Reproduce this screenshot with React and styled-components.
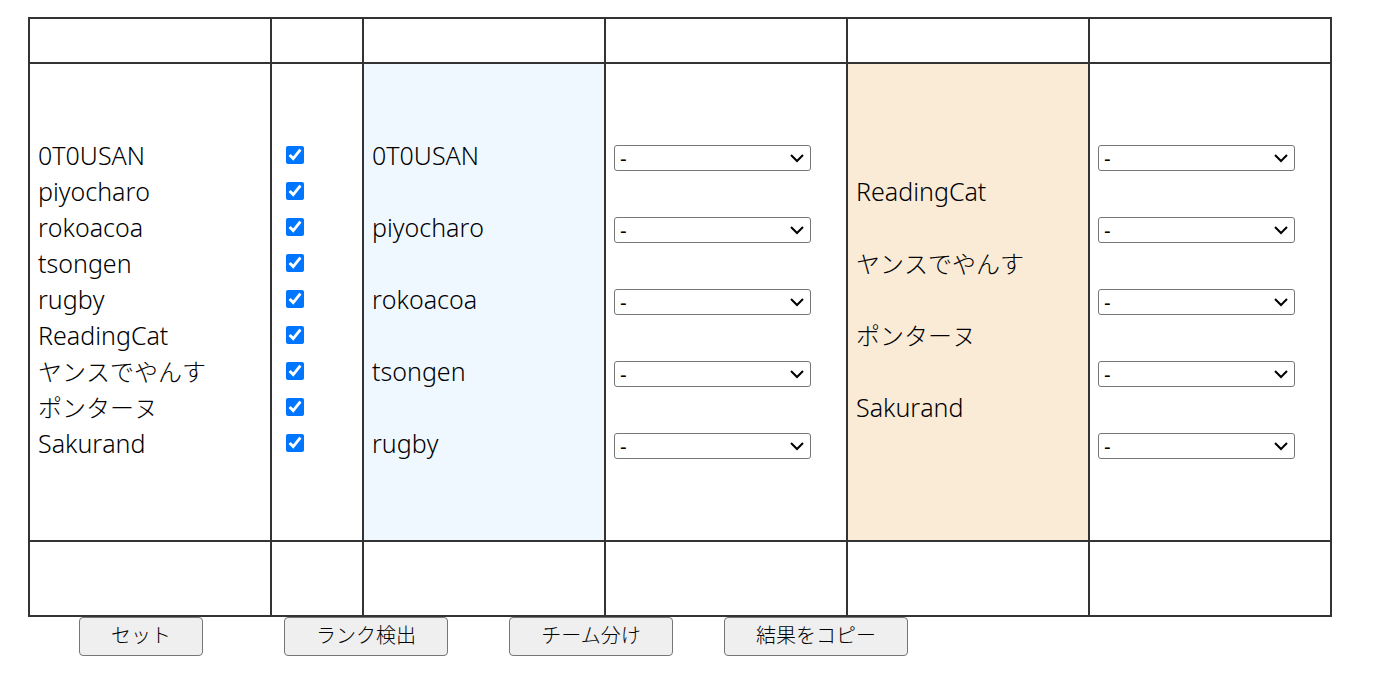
import React, { useState } from "react";
import styled, { createGlobalStyle } from "styled-components";

const GlobalStyle = createGlobalStyle`
  *, *::before, *::after { box-sizing: border-box; }
  body {
    margin: 0;
    background: #fff;
    color: #000;
    font-family: "Noto Sans", "Noto Sans CJK JP", sans-serif;
    font-weight: 350;
    font-size: 25px;
    line-height: 34px;
    font-kerning: none;
  }
`;

const Page = styled.main`
  padding: 17px 46px 18px 28px;
`;

const Board = styled.table`
  width: 100%;
  table-layout: fixed;
  border-collapse: collapse;
`;

const CheckCol = styled.col`
  width: 92px;
`;

const Cell = styled.td`
  height: ${(p) => p.$height}px;
  padding: 0;
  border: 2px solid #333;
`;

const ListCell = styled.td`
  padding: 74px 8px 78px;
  padding-left: ${(p) => p.$inset || 8}px;
  border: 2px solid #333;
  background: ${(p) => p.$tint || "transparent"};
  vertical-align: top;
`;

const Lines = styled.ul`
  display: grid;
  grid-auto-rows: 36px;
  row-gap: ${(p) => (p.$spaced ? 36 : 0)}px;
  margin: 0;
  padding: ${(p) => (p.$shifted ? 36 : 0)}px 0 0;
  list-style: none;
`;

const Line = styled.li`
  display: flex;
  align-items: flex-start;
  white-space: nowrap;

  &:lang(ja) {
    font-weight: 300;
    font-size: 24px;
    line-height: 36px;
  }
`;

const Check = styled.input`
  width: 18px;
  height: 18px;
  margin: 8px 0 0;
`;

const SelectBox = styled.div`
  position: relative;
  width: 197px;
  max-width: 100%;
  height: 26px;
  margin-top: 7px;
`;

const RankSelect = styled.select`
  display: block;
  appearance: none;
  width: 100%;
  height: 100%;
  padding: 2px 24px 0 5px;
  border: 1px solid #767676;
  border-radius: 3px;
  background: #fff;
  color: #000;
  font: 400 20px/22px "Liberation Sans", sans-serif;
`;

const Chevron = styled.svg`
  position: absolute;
  top: 8px;
  right: 6px;
  width: 16px;
  height: 10px;
  fill: none;
  stroke: #000;
  stroke-width: 2;
  pointer-events: none;
`;

const Actions = styled.div`
  display: flex;
  flex-wrap: wrap;
`;

const Action = styled.button`
  min-width: ${(p) => p.$width}px;
  height: 39px;
  margin-left: ${(p) => p.$before}px;
  padding: 0 30px 1px;
  border: 1px solid #767676;
  border-radius: 4px;
  background: #efefef;
  color: #000;
  font-family: inherit;
  font-weight: 300;
  font-size: 20px;
  line-height: 30px;
`;

const members = [
  { name: "0T0USAN" },
  { name: "piyocharo" },
  { name: "rokoacoa" },
  { name: "tsongen" },
  { name: "rugby" },
  { name: "ReadingCat" },
  { name: "ヤンスでやんす", lang: "ja" },
  { name: "ポンターヌ", lang: "ja" },
  { name: "Sakurand" },
];

const teamA = members.slice(0, 5);
const teamB = members.slice(5);
const slots = [1, 2, 3, 4, 5];

const actions = [
  { label: "セット", before: 51, width: 124 },
  { label: "ランク検出", before: 81, width: 164 },
  { label: "チーム分け", before: 61, width: 164 },
  { label: "結果をコピー", before: 51, width: 184 },
];

function BlankRow({ height }) {
  return (
    <tr>
      {[0, 1, 2, 3, 4, 5].map((i) => (
        <Cell key={i} $height={height} />
      ))}
    </tr>
  );
}

function TeamList({ team, shifted }) {
  return (
    <Lines $spaced $shifted={shifted}>
      {team.map(({ name, lang }) => (
        <Line key={name} lang={lang}>
          {name}
        </Line>
      ))}
    </Lines>
  );
}

function RankList({ team }) {
  return (
    <Lines $spaced>
      {slots.map((n) => (
        <Line key={n}>
          <SelectBox>
            <RankSelect aria-label={`${team} ${n}`}>
              <option>-</option>
            </RankSelect>
            <Chevron viewBox="0 0 16 10" aria-hidden="true">
              <path d="M2 2l6 6 6-6" />
            </Chevron>
          </SelectBox>
        </Line>
      ))}
    </Lines>
  );
}

export default function App() {
  const [active, setActive] = useState(() => members.map(() => true));
  const toggle = (index) =>
    setActive((prev) => prev.map((on, i) => (i === index ? !on : on)));

  return (
    <Page>
      <GlobalStyle />
      <Board>
        <colgroup>
          <col />
          <CheckCol />
          <col />
          <col />
          <col />
          <col />
        </colgroup>
        <tbody>
          <BlankRow height={45} />
          <tr>
            <ListCell>
              <Lines>
                {members.map(({ name, lang }, i) => (
                  <Line key={name} lang={lang}>
                    <label htmlFor={`member-${i}`}>{name}</label>
                  </Line>
                ))}
              </Lines>
            </ListCell>
            <ListCell $inset={14}>
              <Lines>
                {members.map(({ name }, i) => (
                  <Line key={name}>
                    <Check
                      type="checkbox"
                      id={`member-${i}`}
                      checked={active[i]}
                      onChange={() => toggle(i)}
                    />
                  </Line>
                ))}
              </Lines>
            </ListCell>
            <ListCell $tint="aliceblue">
              <TeamList team={teamA} />
            </ListCell>
            <ListCell>
              <RankList team="A" />
            </ListCell>
            <ListCell $tint="antiquewhite">
              <TeamList team={teamB} shifted />
            </ListCell>
            <ListCell>
              <RankList team="B" />
            </ListCell>
          </tr>
          <BlankRow height={75} />
        </tbody>
      </Board>
      <Actions>
        {actions.map(({ label, before, width }) => (
          <Action
            key={label}
            type="button"
            lang="ja"
            $before={before}
            $width={width}
          >
            {label}
          </Action>
        ))}
      </Actions>
    </Page>
  );
}
